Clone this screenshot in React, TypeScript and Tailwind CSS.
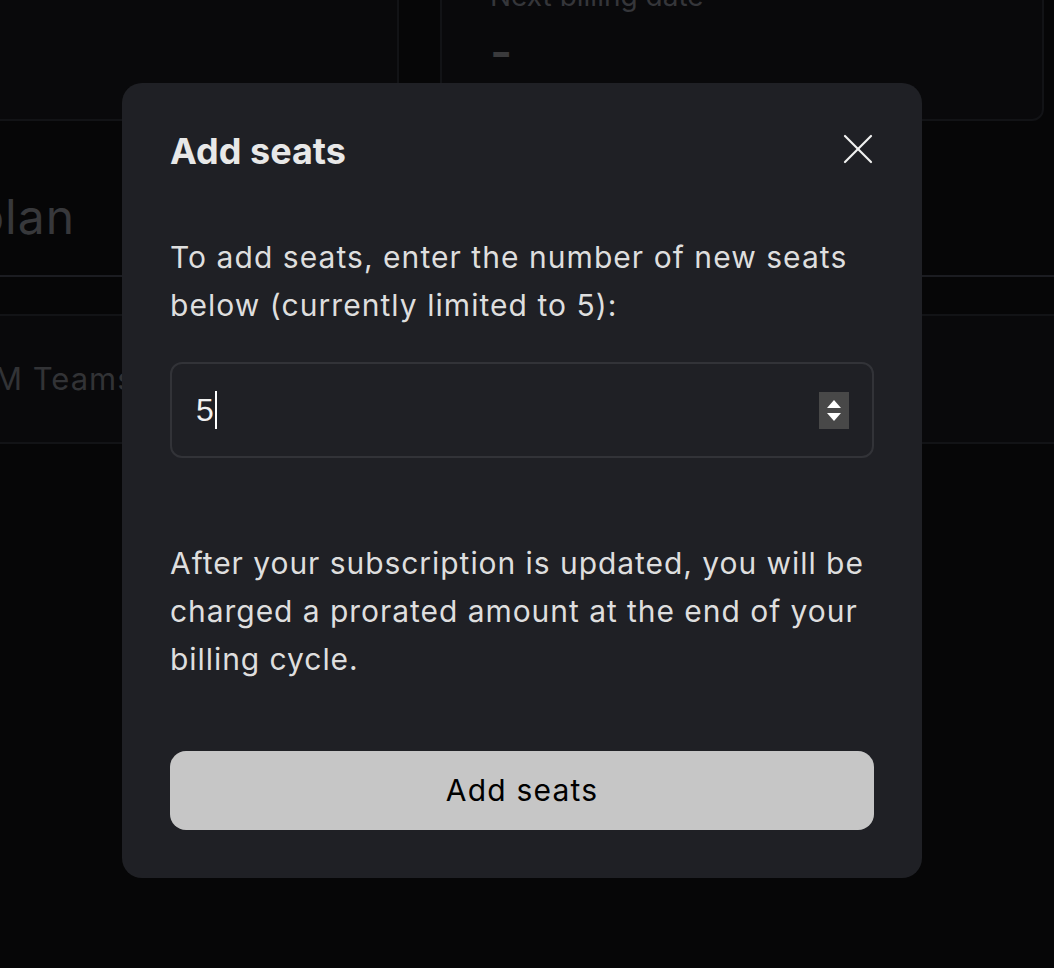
import React from "react";

function CloseIcon() {
  return (
    <svg width="30" height="30" viewBox="0 0 30 30" fill="none" stroke="#f2f2f2" strokeWidth="2.2" strokeLinecap="round">
      <path d="M2 2 L28 28" />
      <path d="M28 2 L2 28" />
    </svg>
  );
}

function Spinner() {
  return (
    <div className="flex h-[37px] w-[30px] flex-col items-center justify-center gap-[5px] bg-[#484848]">
      <svg width="14" height="8" viewBox="0 0 14 8">
        <path d="M7 0 L14 8 L0 8 Z" fill="#ffffff" />
      </svg>
      <svg width="14" height="8" viewBox="0 0 14 8">
        <path d="M0 0 L14 0 L7 8 Z" fill="#ffffff" />
      </svg>
    </div>
  );
}

export default function App() {
  return (
    <div className="relative h-[968px] w-[1054px] overflow-hidden bg-[#060607] font-['Inter',sans-serif]">
      {/* dimmed page behind the dialog */}
      <div className="flex flex-col">
        <div className="-mt-[20px] flex h-[141px] gap-[41px]">
          <div className="h-full w-[399px] rounded-br-[12px] border-2 border-l-0 border-[#121316] bg-[#09090b]" />
          <div className="flex h-full w-[604px] flex-col rounded-b-[12px] border-2 border-[#121316] bg-[#09090b] pl-[48px]">
            <div className="-mt-[6px] h-[40px] whitespace-nowrap text-[28px] leading-[40px] text-[#35363a]">Next billing date</div>
            <div className="mt-[8px] text-[48px] font-semibold leading-[56px] text-[#3a3a3c]">-</div>
          </div>
        </div>
        <div className="flex h-[156px] items-center border-b-2 border-[#1b1c21]">
          <div className="flex w-[75px] justify-end overflow-hidden whitespace-nowrap pt-[38px] text-[48px] leading-[56px] tracking-[1px] text-[#37383b]">
            Current plan
          </div>
        </div>
        <div className="mt-[37px] flex h-[130px] items-center border-y-2 border-[#121316] bg-[#09090b]">
          <div className="-ml-[6px] whitespace-nowrap text-[31px] tracking-[1px] text-[#323336]">M Teams</div>
        </div>
      </div>

      {/* dialog */}
      <div className="absolute inset-0 pl-[122px] pt-[83px]">
        <div className="w-[800px] rounded-[20px] bg-[#1f2025] p-[48px]">
          <div className="flex h-[40px] items-center justify-between">
            <h2 className="text-[36px] font-bold leading-[40px] text-[#e8e8e8]">Add seats</h2>
            <button className="mr-[1px] -mt-[4px] flex items-center justify-center">
              <CloseIcon />
            </button>
          </div>
          <p className="mt-[62px] text-[30px] leading-[48px] tracking-[1.05px] text-[#dedede]">
            To add seats, enter the number of new seats below (currently limited to 5):
          </p>
          <div className="mt-[33px] flex h-[96px] items-center justify-between rounded-[12px] border-2 border-[#323338] pl-[24px] pr-[23px]">
            <div className="flex items-center">
              <span className="font-['Liberation_Sans',sans-serif] text-[32px] leading-[40px] text-[#f0f0f0]">5</span>
              <span className="ml-[1px] h-[38px] w-[2px] bg-white" />
            </div>
            <Spinner />
          </div>
          <p className="mt-[81px] text-[30px] leading-[48px] tracking-[0.95px] text-[#dedede]">
            After your subscription is updated, you will be charged a prorated amount at the end of your billing cycle.
          </p>
          <button className="mt-[68px] flex h-[79px] w-full items-center justify-center rounded-[16px] bg-[#c6c6c6] text-[30px] tracking-[1.2px] text-black">
            Add seats
          </button>
        </div>
      </div>
    </div>
  );
}
